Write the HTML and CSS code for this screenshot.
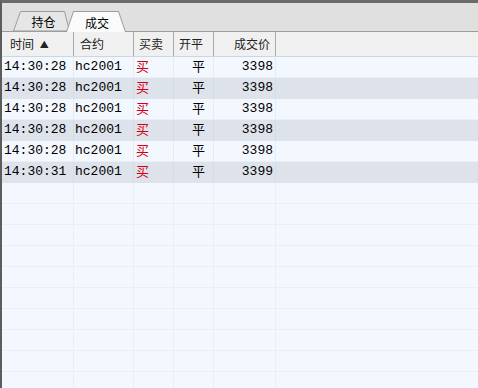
FILE: index.html
```html
<!DOCTYPE html>
<html lang="zh">
<head>
<meta charset="utf-8">
<link rel="stylesheet" href="styles.css">
</head>
<body>
<div class="frame">
  <div class="tabbar">
    <div class="tab tab-inactive">
      <svg class="tab-shape" width="57" height="20" viewBox="0 0 57 20"><polygon points="0.5,20 7.5,0.5 51.5,0.5 56.5,20" fill="#e6e6e6" stroke="#9c9c9c" stroke-width="1"/></svg>
      <span class="tab-label">持仓</span>
    </div>
    <div class="tab tab-active">
      <svg class="tab-shape" width="60" height="21" viewBox="0 0 60 21"><polygon points="0.5,21 7.5,0.5 52.5,0.5 59.5,21" fill="#fbfbfb" stroke="none"/><polyline points="0.5,21 7.5,0.5 52.5,0.5 59.5,21" fill="none" stroke="#9c9c9c" stroke-width="1"/></svg>
      <span class="tab-label">成交</span>
    </div>
  </div>
  <div class="grid">
    <div class="row head">
      <div class="h h1">时间 <span class="sort">▲</span></div>
      <div class="h h2">合约</div>
      <div class="h h3">买卖</div>
      <div class="h h4">开平</div>
      <div class="h h5">成交价</div>
      <div class="h h6"></div>
    </div>
    <div class="row data odd"><div class="c c1 mono">14:30:28</div><div class="c c2 mono">hc2001</div><div class="c c3 buy">买</div><div class="c c4">平</div><div class="c c5 mono">3398</div><div class="c c6"></div></div>
    <div class="row data even"><div class="c c1 mono">14:30:28</div><div class="c c2 mono">hc2001</div><div class="c c3 buy">买</div><div class="c c4">平</div><div class="c c5 mono">3398</div><div class="c c6"></div></div>
    <div class="row data odd"><div class="c c1 mono">14:30:28</div><div class="c c2 mono">hc2001</div><div class="c c3 buy">买</div><div class="c c4">平</div><div class="c c5 mono">3398</div><div class="c c6"></div></div>
    <div class="row data even"><div class="c c1 mono">14:30:28</div><div class="c c2 mono">hc2001</div><div class="c c3 buy">买</div><div class="c c4">平</div><div class="c c5 mono">3398</div><div class="c c6"></div></div>
    <div class="row data odd"><div class="c c1 mono">14:30:28</div><div class="c c2 mono">hc2001</div><div class="c c3 buy">买</div><div class="c c4">平</div><div class="c c5 mono">3398</div><div class="c c6"></div></div>
    <div class="row data even"><div class="c c1 mono">14:30:31</div><div class="c c2 mono">hc2001</div><div class="c c3 buy">买</div><div class="c c4">平</div><div class="c c5 mono">3399</div><div class="c c6"></div></div>
    <div class="row empty"><div class="c"></div><div class="c"></div><div class="c"></div><div class="c"></div><div class="c"></div><div class="c c6"></div></div>
    <div class="row empty"><div class="c"></div><div class="c"></div><div class="c"></div><div class="c"></div><div class="c"></div><div class="c c6"></div></div>
    <div class="row empty"><div class="c"></div><div class="c"></div><div class="c"></div><div class="c"></div><div class="c"></div><div class="c c6"></div></div>
    <div class="row empty"><div class="c"></div><div class="c"></div><div class="c"></div><div class="c"></div><div class="c"></div><div class="c c6"></div></div>
    <div class="row empty"><div class="c"></div><div class="c"></div><div class="c"></div><div class="c"></div><div class="c"></div><div class="c c6"></div></div>
    <div class="row empty"><div class="c"></div><div class="c"></div><div class="c"></div><div class="c"></div><div class="c"></div><div class="c c6"></div></div>
    <div class="row empty"><div class="c"></div><div class="c"></div><div class="c"></div><div class="c"></div><div class="c"></div><div class="c c6"></div></div>
    <div class="row empty"><div class="c"></div><div class="c"></div><div class="c"></div><div class="c"></div><div class="c"></div><div class="c c6"></div></div>
    <div class="row empty"><div class="c"></div><div class="c"></div><div class="c"></div><div class="c"></div><div class="c"></div><div class="c c6"></div></div>
    <div class="row empty"><div class="c"></div><div class="c"></div><div class="c"></div><div class="c"></div><div class="c"></div><div class="c c6"></div></div>
  </div>
</div>
</body>
</html>
```
FILE: styles.css
```css
html, body {
  margin: 0;
  padding: 0;
  width: 478px;
  height: 388px;
  overflow: hidden;
  background: #f3f7fe;
}
.frame {
  width: 476px;
  height: 385px;
  border-left: 2px solid #5c5c5c;
  border-top: 3px solid #6c6c6c;
  background: #f3f7fe;
  overflow: hidden;
  font-family: "Noto Sans CJK SC", "Liberation Sans", sans-serif;
  color: #000;
}
.tabbar {
  height: 28px;
  background: #e0e0e0;
  border-bottom: 1px solid #9c9c9c;
  display: flex;
  align-items: flex-end;
  padding-left: 11px;
}
.tab {
  position: relative;
  height: 20px;
  display: flex;
  align-items: center;
  justify-content: center;
  font-size: 12px;
  line-height: 20px;
}
.tab-inactive {
  width: 57px;
}
.tab-active {
  width: 60px;
  height: 21px;
  margin-left: -4px;
  margin-bottom: -1px;
  z-index: 1;
}
.tab-shape {
  position: absolute;
  left: 0;
  top: 0;
}
.tab-label {
  position: relative;
  padding-top: 1px;
}
.tab-inactive .tab-label { margin-left: 4px; }
.tab-active .tab-label { margin-left: 2px; padding-top: 3px; }
.grid {
  display: flex;
  flex-direction: column;
}
.row {
  display: grid;
  grid-template-columns: 72px 60px 40px 40px 62px 1fr;
  height: 21px;
  box-sizing: border-box;
  border-bottom: 1px solid #eaeef6;
}
.row.head {
  height: 25px;
  background: #f0f0f0;
  border-bottom: 1px solid #c9d6e4;
  font-size: 12px;
  color: #222;
}
.h {
  border-right: 1px solid #a9a9a9;
  line-height: 24px;
  white-space: nowrap;
  overflow: hidden;
}
.h1 { padding-left: 8px; }
.h2 { padding-left: 6px; }
.h3 { padding-left: 5px; }
.h4 { padding-left: 5px; }
.h5 { text-align: right; padding-right: 5px; }
.h6 { border-right: none; }
.sort { font-size: 9px; margin-left: 3px; position: relative; top: -1px; }
.c {
  border-right: 1px solid #eaeef6;
  white-space: nowrap;
  overflow: hidden;
  line-height: 20px;
  font-size: 13px;
}
.c6 { border-right: none; }
.odd { background: #f3f7fe; }
.even { background: #dee3eb; border-bottom-color: #dee3eb; }
.even .c { border-right-color: #d6dce5; }
.odd .c { border-right-color: #e6ebf3; }
.mono { font-family: "Liberation Mono", "DejaVu Sans Mono", monospace; font-size: 13px; }
.data .c1 { padding-left: 2px; }
.data .c2 { padding-left: 1px; }
.data .c3 { padding-left: 2px; line-height: 18px; }
.data .c4 { padding-left: 18px; line-height: 18px; }
.data .c5 { text-align: right; padding-right: 2px; }
.buy { color: #d4000f; }
```
